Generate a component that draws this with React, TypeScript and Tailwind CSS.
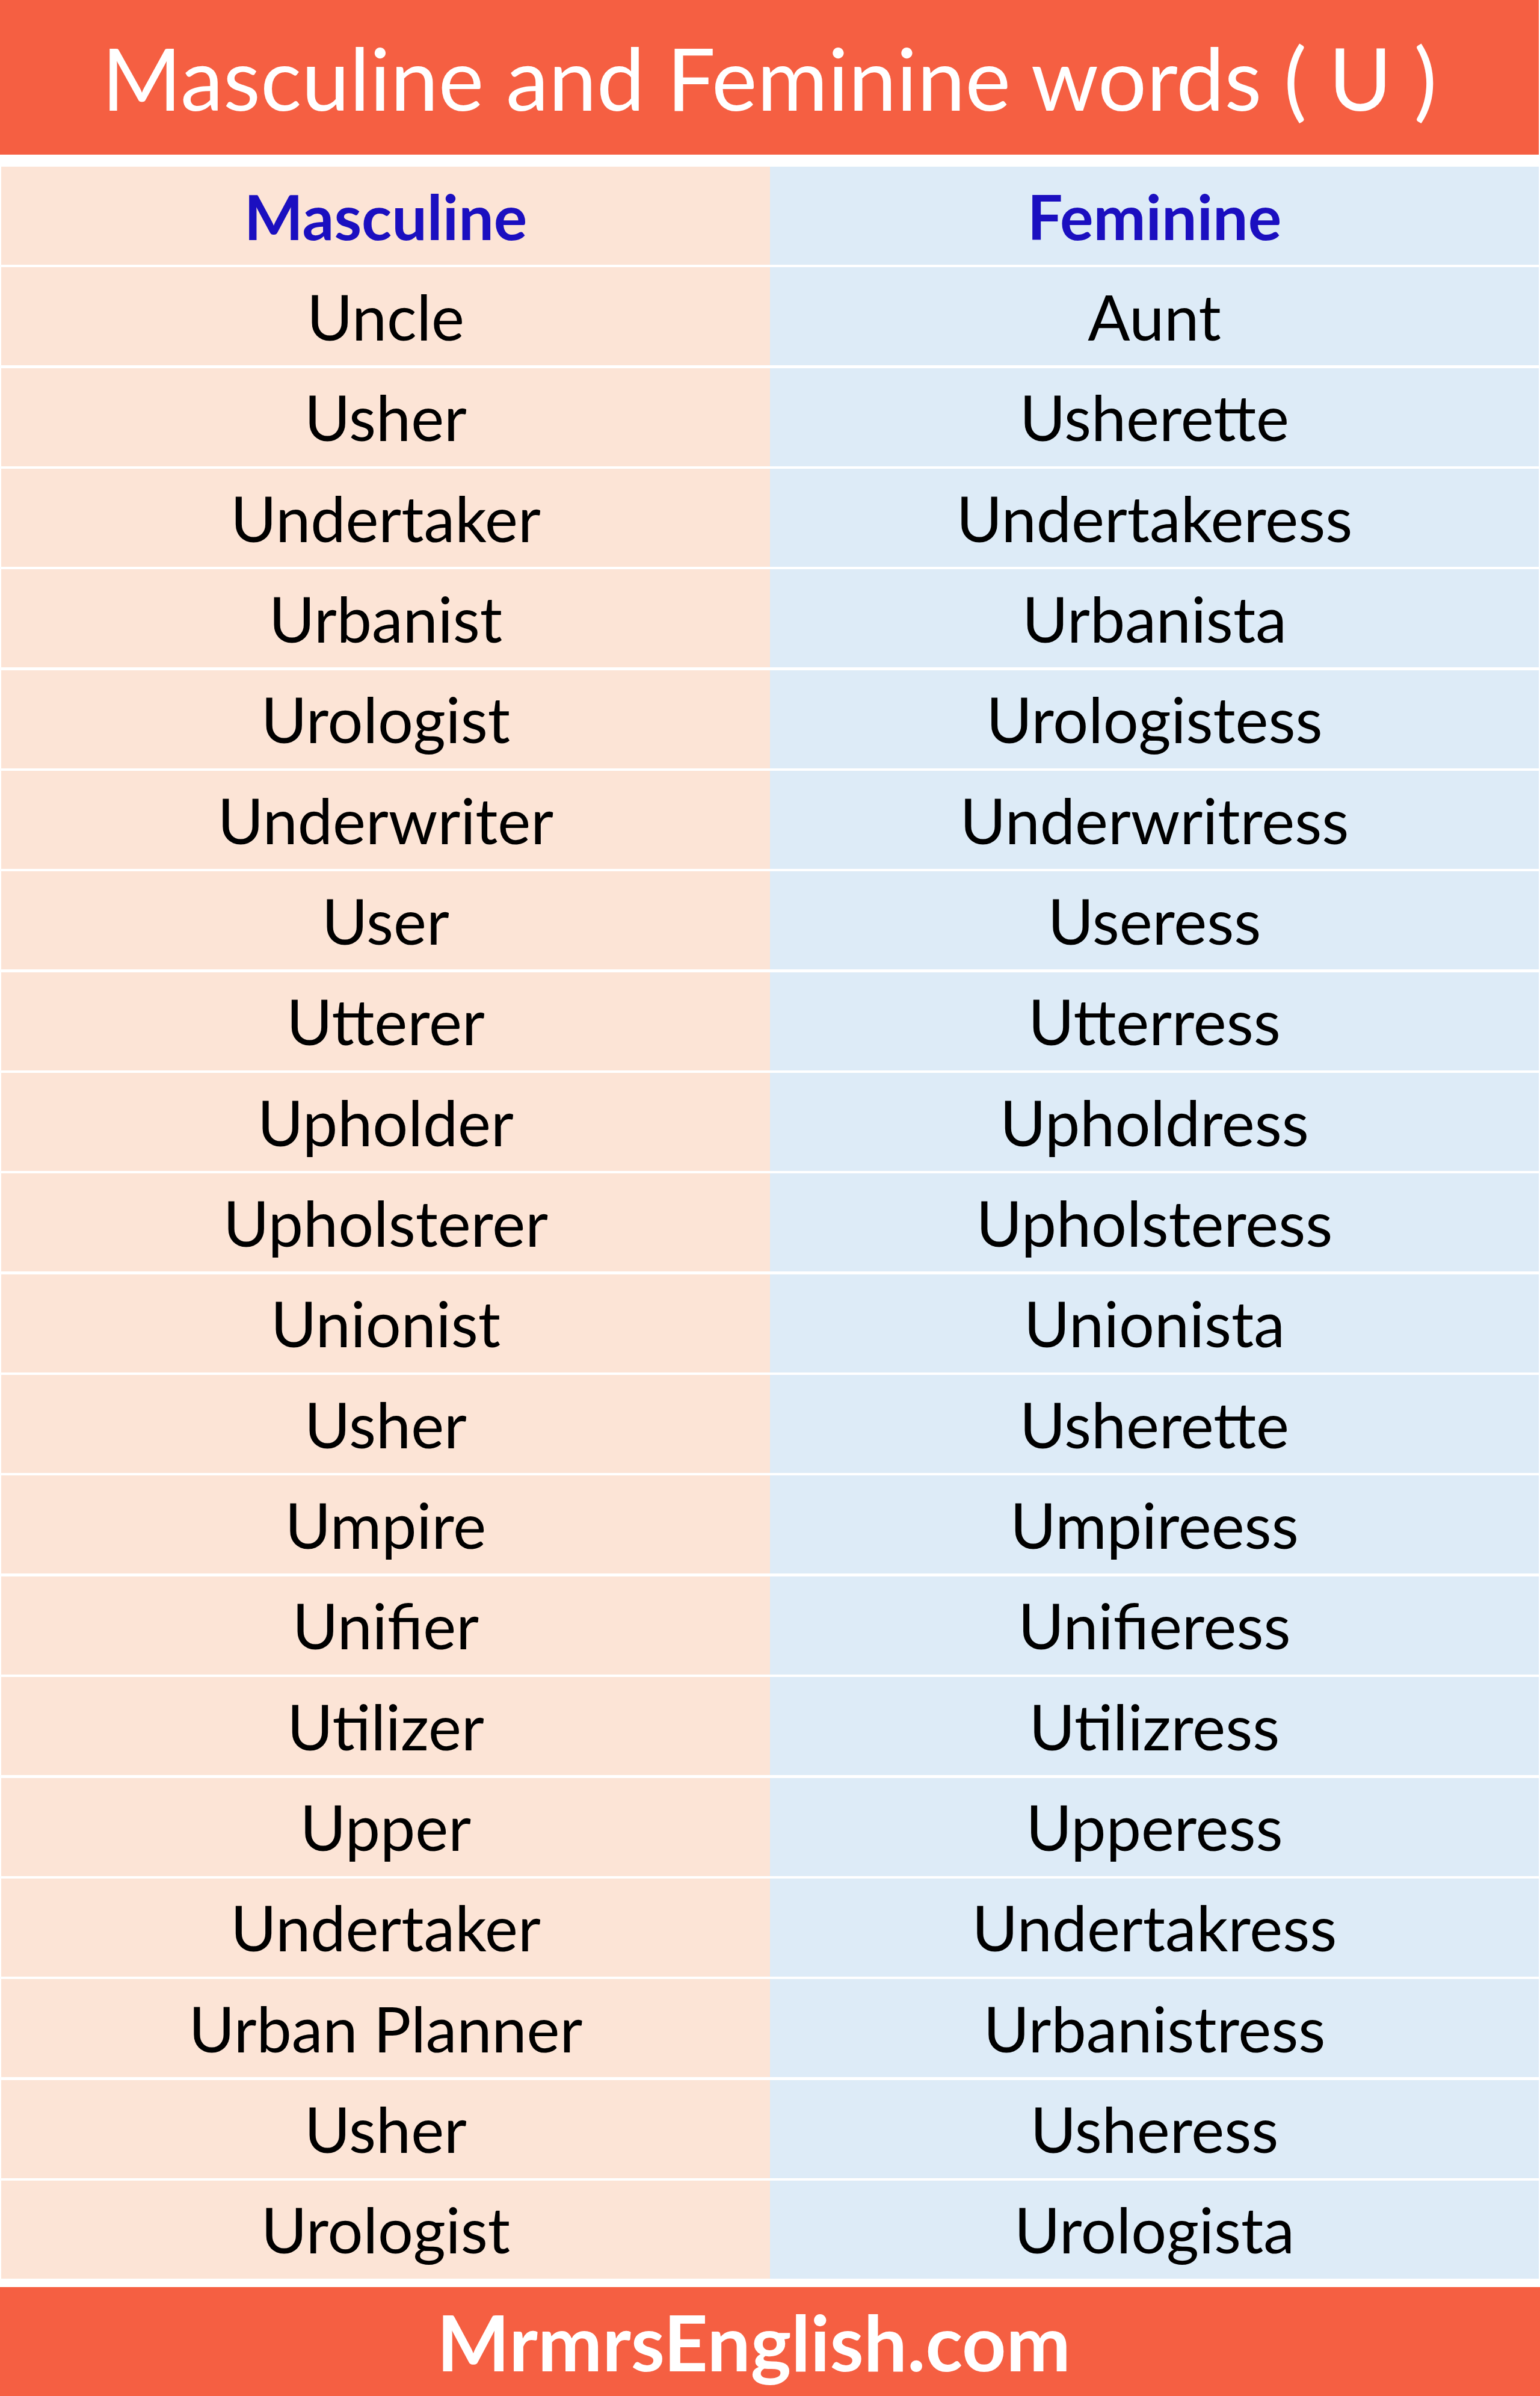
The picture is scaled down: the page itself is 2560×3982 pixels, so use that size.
import React from 'react';

const rows: [string, string][] = [
  ['Uncle', 'Aunt'],
  ['Usher', 'Usherette'],
  ['Undertaker', 'Undertakeress'],
  ['Urbanist', 'Urbanista'],
  ['Urologist', 'Urologistess'],
  ['Underwriter', 'Underwritress'],
  ['User', 'Useress'],
  ['Utterer', 'Utterress'],
  ['Upholder', 'Upholdress'],
  ['Upholsterer', 'Upholsteress'],
  ['Unionist', 'Unionista'],
  ['Usher', 'Usherette'],
  ['Umpire', 'Umpireess'],
  ['Unifier', 'Unifieress'],
  ['Utilizer', 'Utilizress'],
  ['Upper', 'Upperess'],
  ['Undertaker', 'Undertakress'],
  ['Urban Planner', 'Urbanistress'],
  ['Usher', 'Usheress'],
  ['Urologist', 'Urologista'],
];

function Row({ left, right, head }: { left: string; right: string; head?: boolean }) {
  const text = head
    ? 'font-bold text-[#1b0fc0] text-[104px]'
    : 'text-black text-[104px]';
  return (
    <div className="grid grid-cols-2 h-[163px]">
      <div className={`bg-[#fce4d6] flex items-center justify-center leading-none ${text}`}>
        {left}
      </div>
      <div className={`bg-[#ddebf7] flex items-center justify-center leading-none ${text}`}>
        {right}
      </div>
    </div>
  );
}

export default function App() {
  return (
    <div className="w-[2560px] h-[3982px] bg-white flex flex-col font-['Lato',sans-serif]">
      <header className="h-[257px] mr-[2px] bg-[#f55f42] flex items-center justify-center">
        <h1 className="text-white text-[143px] leading-none font-['Comic_Sans_MS','Lato',sans-serif]">
          Masculine and Feminine words ( U )
        </h1>
      </header>

      <div className="mt-[20px] mx-[2px] flex flex-col gap-[4.35px]">
        <Row left="Masculine" right="Feminine" head />
        {rows.map(([m, f], i) => (
          <Row key={i} left={m} right={f} />
        ))}
      </div>

      <footer className="mt-auto h-[181px] bg-[#f55f42] flex items-center justify-center">
        <span className="text-white font-bold text-[128px] leading-none mr-[54px]">
          MrmrsEnglish.com
        </span>
      </footer>
    </div>
  );
}
